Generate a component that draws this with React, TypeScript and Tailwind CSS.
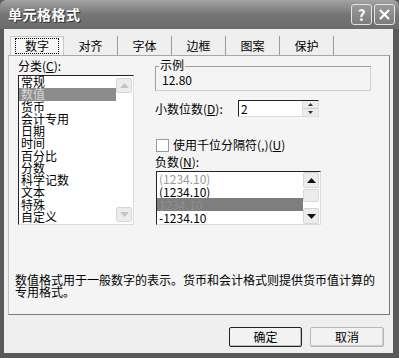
import React from 'react';

const font = { fontFamily: '"Noto Sans CJK SC", "Liberation Sans", sans-serif' };

const categories = ['常规', '数值', '货币', '会计专用', '日期', '时间', '百分比', '分数', '科学记数', '文本', '特殊', '自定义'];
const tabs = ['数字', '对齐', '字体', '边框', '图案', '保护'];

const Arrow = ({ up, faint }: { up?: boolean; faint?: boolean }) => (
  <svg width="9" height="5" viewBox="0 0 9 5" className={up ? '' : 'rotate-180'}>
    <path d="M0 5 L4.5 0 L9 5 Z" fill={faint ? '#c4c4c4' : '#111'} />
  </svg>
);

const ScrollBtn = ({ up, faint, h }: { up?: boolean; faint?: boolean; h: string }) => (
  <div className={`${h} w-full flex items-center justify-center bg-[#ececec] border border-[#d6d6d6] rounded-[2px]`}>
    <Arrow up={up} faint={faint} />
  </div>
);

export default function App() {
  return (
    <div className="w-[399px] h-[358px] flex flex-col bg-[#5a5a5a] text-[12px] text-black select-none" style={font}>
      {/* title bar */}
      <div className="h-[29px] shrink-0 flex items-center justify-between pl-[8px] pr-[4px] bg-gradient-to-b from-[#a4a4a4] via-[#757575] to-[#6c6c6c] rounded-t-[6px]">
        <span className="text-white font-bold text-[14px] tracking-[0.5px] [text-shadow:1px_1px_0_#333]">单元格格式</span>
        <div className="flex gap-[2px]">
          <div className="w-[21px] h-[21px] rounded-[3px] border border-[#e4e4e4] bg-gradient-to-b from-[#9a9a9a] to-[#7c7c7c] flex items-center justify-center text-white font-bold text-[15px] leading-none">?</div>
          <div className="w-[21px] h-[21px] rounded-[3px] border border-[#e4e4e4] bg-gradient-to-b from-[#9a9a9a] to-[#7c7c7c] flex items-center justify-center">
            <svg width="11" height="11" viewBox="0 0 11 11">
              <path d="M1 1 L10 10 M10 1 L1 10" stroke="#fff" strokeWidth="2.2" />
            </svg>
          </div>
        </div>
      </div>

      {/* body */}
      <div className="flex-1 ml-[4px] mr-[6px] mb-[5px] bg-[#efefef] flex flex-col pl-[4px]">
        {/* tabs */}
        <div className="mt-[7px] h-[19px] flex items-end">
          {tabs.map((t, i) => (
            <div
              key={t}
              className={`h-[19px] w-[54px] flex items-center justify-center border-r border-[#9a9a9a] ${i === 0 ? 'ml-[2px] bg-[#f6f6f6] border-l border-t border-[#c8c8c8]' : ''}`}
            >
              {i === 0 ? (
                <span className="border border-dotted border-black px-[9px] leading-[14px]">{t}</span>
              ) : (
                <span>{t}</span>
              )}
            </div>
          ))}
        </div>

        {/* panel */}
        <div className="h-[260px] w-[382px] bg-[#f4f4f4] border border-t-[#a8a8a8] border-l-[#c0c0c0] border-r-[#7a7a7a] border-b-[#7a7a7a] flex flex-col">
          <div className="flex h-[169px]">
            {/* left column */}
            <div className="pl-[9px] pt-[2px] flex flex-col">
              <div className="h-[16px] leading-[16px]">分类(<span className="underline">C</span>):</div>
              <div className="mt-[1px] w-[116px] h-[150px] bg-white border border-t-[#222] border-l-[#222] border-r-[#ddd] border-b-[#ddd] flex">
                <div className="flex-1 flex flex-col">
                  {categories.map((c, i) => (
                    <div
                      key={c}
                      className={`h-[12.25px] leading-[12px] pl-[2px] ${i === 1 ? 'bg-[#8c8c8c] text-[#d8d8d8]' : ''}`}
                    >
                      {c}
                    </div>
                  ))}
                </div>
                <div className="w-[17px] flex flex-col justify-between py-[2px] pr-[1px]">
                  <ScrollBtn up faint h="h-[15px]" />
                  <ScrollBtn faint h="h-[15px]" />
                </div>
              </div>
            </div>

            {/* right column */}
            <div className="ml-[21px] flex flex-col">
              <div className="relative mt-[10px] w-[216px] h-[25px] border border-t-[#a0a0a0] border-l-[#a0a0a0] border-r-[#cfcfcf] border-b-[#cfcfcf]">
                <span className="absolute -top-[9px] left-[3px] bg-[#f4f4f4] px-[1px] leading-[14px]">示例</span>
                <div className="pl-[6px] pt-[7px] leading-[12px]">12.80</div>
              </div>

              <div className="mt-[9px] h-[17px] flex items-center">
                <span className="w-[83px]">小数位数(<span className="underline">D</span>):</span>
                <div className="w-[81px] h-[17px] bg-white border border-t-[#222] border-l-[#222] border-r-[#ddd] border-b-[#ddd] flex items-center">
                  <span className="flex-1 pl-[2px] leading-[14px]">2</span>
                  <div className="w-[16px] h-[15px] flex flex-col border-l border-[#ddd]">
                    <div className="flex-1 flex items-center justify-center bg-[#ececec]">
                      <svg width="5" height="3" viewBox="0 0 5 3"><path d="M0 3 L2.5 0 L5 3 Z" fill="#333" /></svg>
                    </div>
                    <div className="flex-1 flex items-center justify-center bg-[#ececec] border-t border-[#ccc]">
                      <svg width="5" height="3" viewBox="0 0 5 3"><path d="M0 0 L2.5 3 L5 0 Z" fill="#333" /></svg>
                    </div>
                  </div>
                </div>
              </div>

              <div className="mt-[21px] h-[14px] flex items-center">
                <div className="w-[13px] h-[13px] bg-white border border-[#9a9a9a] ml-[1px]" />
                <span className="ml-[4px]">使用千位分隔符(,)(<span className="underline">U</span>)</span>
              </div>

              <div className="mt-[3px] h-[14px] leading-[14px]">负数(<span className="underline">N</span>):</div>
              <div className="mt-[2px] ml-[1px] w-[165px] h-[54px] bg-white border border-t-[#222] border-l-[#222] border-r-[#ddd] border-b-[#ddd] flex">
                <div className="flex-1 flex flex-col">
                  <div className="h-[13px] leading-[13px] pl-[2px] text-[#9a9a9a]">(1234.10)</div>
                  <div className="h-[13px] leading-[13px] pl-[2px]">(1234.10)</div>
                  <div className="h-[13px] leading-[13px] pl-[2px] bg-[#7e7e7e] text-[#8e8e8e]">1234.10</div>
                  <div className="h-[13px] leading-[13px] pl-[2px]">-1234.10</div>
                </div>
                <div className="w-[17px] flex flex-col pr-[1px]">
                  <ScrollBtn up h="h-[16px]" />
                  <div className="h-[13px] mt-[1px] bg-[#ececec] border border-[#d6d6d6] rounded-[2px]" />
                  <div className="flex-1" />
                  <ScrollBtn h="h-[16px]" />
                </div>
              </div>
            </div>
          </div>

          <div className="mt-[49px] pl-[6px] leading-[12px]">
            数值格式用于一般数字的表示。货币和会计格式则提供货币值计算的
            <br />
            专用格式。
          </div>
        </div>

        {/* buttons */}
        <div className="mt-[12px] flex justify-end gap-[8px] pr-[9px]">
          <div className="w-[73px] h-[20px] flex items-center justify-center bg-[#f2f2f2] border border-[#222] rounded-[2px] shadow-[inset_-1px_-1px_0_#bbb]">确定</div>
          <div className="w-[74px] h-[20px] flex items-center justify-center bg-[#f2f2f2] border border-[#b8b8b8] rounded-[2px] shadow-[inset_-1px_-1px_0_#ccc]">取消</div>
        </div>
      </div>
    </div>
  );
}
